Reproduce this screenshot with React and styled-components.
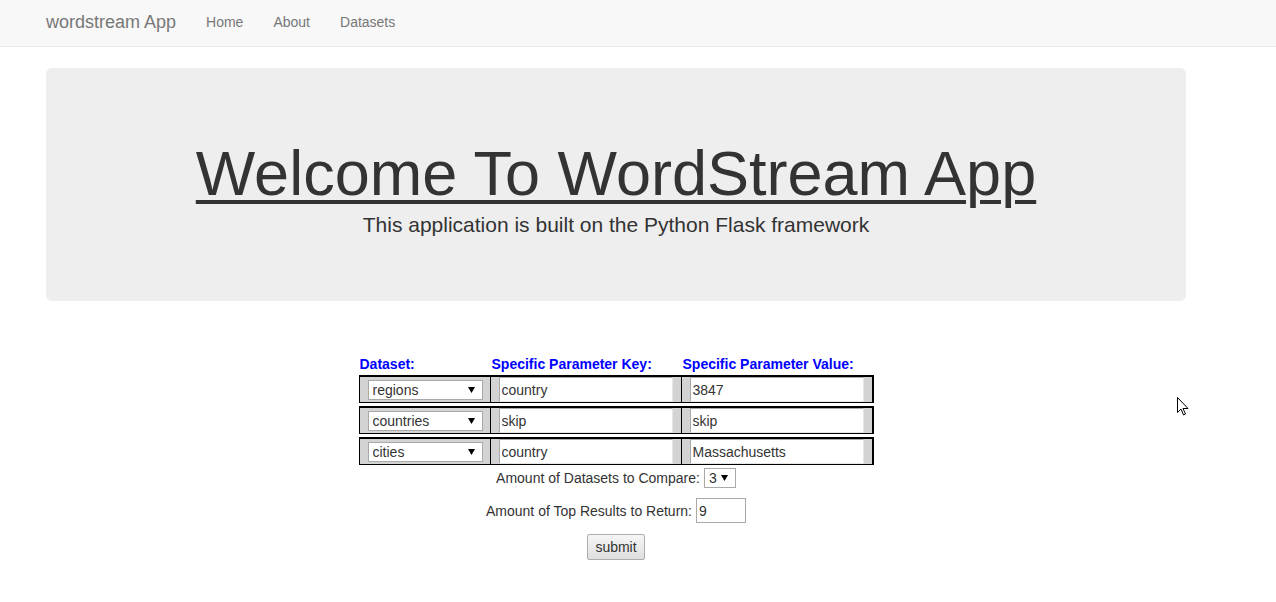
import React from "react";
import styled, { createGlobalStyle } from "styled-components";

const arrow =
  "url(\"data:image/svg+xml;utf8,<svg xmlns='http://www.w3.org/2000/svg' width='7' height='6'><polygon points='0,0 7,0 3.5,6' fill='black'/></svg>\")";

const GlobalStyle = createGlobalStyle`
  html, body {
    margin: 0;
    padding: 0;
    background: #fff;
  }
  body {
    font-family: "Liberation Sans", Arial, Helvetica, sans-serif;
    font-size: 14px;
    color: #333;
  }
`;

const NavBar = styled.nav`
  height: 47px;
  box-sizing: border-box;
  padding-bottom: 2px;
  background: #f8f8f8;
  border-bottom: 1px solid #e7e7e7;
  display: flex;
  align-items: center;
  padding-left: 46px;
`;

const Brand = styled.a`
  font-size: 18px;
  color: #777;
  text-decoration: none;
  margin-right: 30px;
`;

const NavLink = styled.a`
  font-size: 14px;
  color: #777;
  text-decoration: none;
  margin-right: 30px;
`;

const Container = styled.div`
  width: 1140px;
  margin-left: 46px;
`;

const Jumbotron = styled.div`
  margin-top: 21px;
  height: 233px;
  box-sizing: border-box;
  padding-top: 10px;
  background: #eee;
  border-radius: 6px;
  display: flex;
  flex-direction: column;
  align-items: center;
  justify-content: center;
`;

const Title = styled.h1`
  margin: 0;
  font-size: 63px;
  font-weight: 400;
  line-height: 69px;
  text-decoration: underline;
  text-decoration-thickness: 4px;
  text-underline-offset: 5px;
  color: #333;
`;

const Lead = styled.p`
  margin: 2px 0 0;
  font-size: 21px;
  line-height: 30px;
  color: #333;
`;

const Form = styled.form`
  margin-top: 55px;
  display: flex;
  flex-direction: column;
  align-items: center;
`;

const Grid = styled.div`
  width: 515px;
  display: flex;
  flex-direction: column;
  gap: 3px;
`;

const HeadRow = styled.div`
  display: flex;
  padding-left: 1px;
  height: 16px;
  align-items: flex-end;
`;

const Head = styled.div`
  width: ${({ $w }) => $w}px;
  font-size: 14px;
  font-weight: 700;
  color: #0000ff;
  line-height: 15px;
  white-space: nowrap;
`;

const Row = styled.div`
  display: flex;
  border: 1px solid #000;
  border-width: 2px 2px 1px 1px;
  height: 25px;
  background: #d3d3d3;
`;

const Cell = styled.div`
  width: ${({ $w }) => $w}px;
  display: flex;
  align-items: center;
  padding: 0 ${({ $pr }) => $pr}px 0 ${({ $pl }) => $pl}px;
  border-right: ${({ $last }) => ($last ? "0" : "1px solid #000")};
  box-sizing: border-box;
`;

const Select = styled.select`
  appearance: none;
  width: ${({ $w }) => $w}px;
  height: 20px;
  border: 1px solid #a9a9a9;
  background: #fff ${arrow} no-repeat right 7px center;
  font-family: "Liberation Sans", Arial, sans-serif;
  font-size: 14px;
  color: #333;
  padding: 0 0 0 4px;
  margin: 0;
  border-radius: 0;
  box-sizing: border-box;
`;

const TextInput = styled.input`
  width: ${({ $w }) => $w}px;
  height: 25px;
  border: 1px solid #a9a9a9;
  border-right-color: ${({ $plain }) => ($plain ? "#a9a9a9" : "#e6e6e6")};
  border-bottom-color: ${({ $plain }) => ($plain ? "#a9a9a9" : "#e6e6e6")};
  font-family: "Liberation Sans", Arial, sans-serif;
  font-size: 14px;
  color: #333;
  padding: 0 2px;
  margin: 0;
  box-sizing: border-box;
  outline: none;
`;

const Line = styled.div`
  display: flex;
  align-items: center;
  gap: 4px;
  margin-top: ${({ $mt }) => $mt}px;
  font-size: 14px;
  color: #333;
`;

const Button = styled.button`
  margin-top: 11px;
  height: 26px;
  padding: 0 7px;
  font-family: "Liberation Sans", Arial, sans-serif;
  font-size: 14px;
  color: #333;
  border: 1px solid #adadad;
  border-radius: 2px;
  background: linear-gradient(#f6f6f6, #dedede);
`;

const Cursor = styled.svg`
  position: absolute;
  left: 1177px;
  top: 397px;
`;

const rows = [
  { set: "regions", key: "country", value: "3847" },
  { set: "countries", key: "skip", value: "skip" },
  { set: "cities", key: "country", value: "Massachusetts" },
];

export default function App() {
  return (
    <>
      <GlobalStyle />
      <NavBar>
        <Brand href="#">wordstream App</Brand>
        <NavLink href="#">Home</NavLink>
        <NavLink href="#">About</NavLink>
        <NavLink href="#">Datasets</NavLink>
      </NavBar>
      <Container>
        <Jumbotron>
          <Title>Welcome To WordStream App</Title>
          <Lead>This application is built on the Python Flask framework</Lead>
        </Jumbotron>
        <Form onSubmit={(e) => e.preventDefault()}>
          <Grid>
            <HeadRow>
              <Head $w={132}>Dataset:</Head>
              <Head $w={191}>Specific Parameter Key:</Head>
              <Head $w={190}>Specific Parameter Value:</Head>
            </HeadRow>
            {rows.map((r) => (
              <Row key={r.set}>
                <Cell $w={131} $pl={8} $pr={7}>
                  <Select $w={115} defaultValue={r.set}>
                    <option value="regions">regions</option>
                    <option value="countries">countries</option>
                    <option value="cities">cities</option>
                  </Select>
                </Cell>
                <Cell $w={191} $pl={8} $pr={8}>
                  <TextInput $w={174} defaultValue={r.key} />
                </Cell>
                <Cell $w={190} $pl={8} $pr={8} $last>
                  <TextInput $w={174} defaultValue={r.value} />
                </Cell>
              </Row>
            ))}
          </Grid>
          <Line $mt={3}>
            Amount of Datasets to Compare:
            <Select $w={32} defaultValue="3">
              <option>1</option>
              <option>2</option>
              <option>3</option>
            </Select>
          </Line>
          <Line $mt={10}>
            Amount of Top Results to Return:
            <TextInput $w={50} $plain defaultValue="9" />
          </Line>
          <Button type="submit">submit</Button>
        </Form>
      </Container>
      <Cursor width="12" height="20" viewBox="0 0 12 20">
        <path
          d="M0.5 0.5 L0.5 15.5 L4 12 L6.5 18 L8.5 17 L6 11.5 L11 11.5 Z"
          fill="#fff"
          stroke="#000"
          strokeWidth="1"
        />
      </Cursor>
    </>
  );
}
